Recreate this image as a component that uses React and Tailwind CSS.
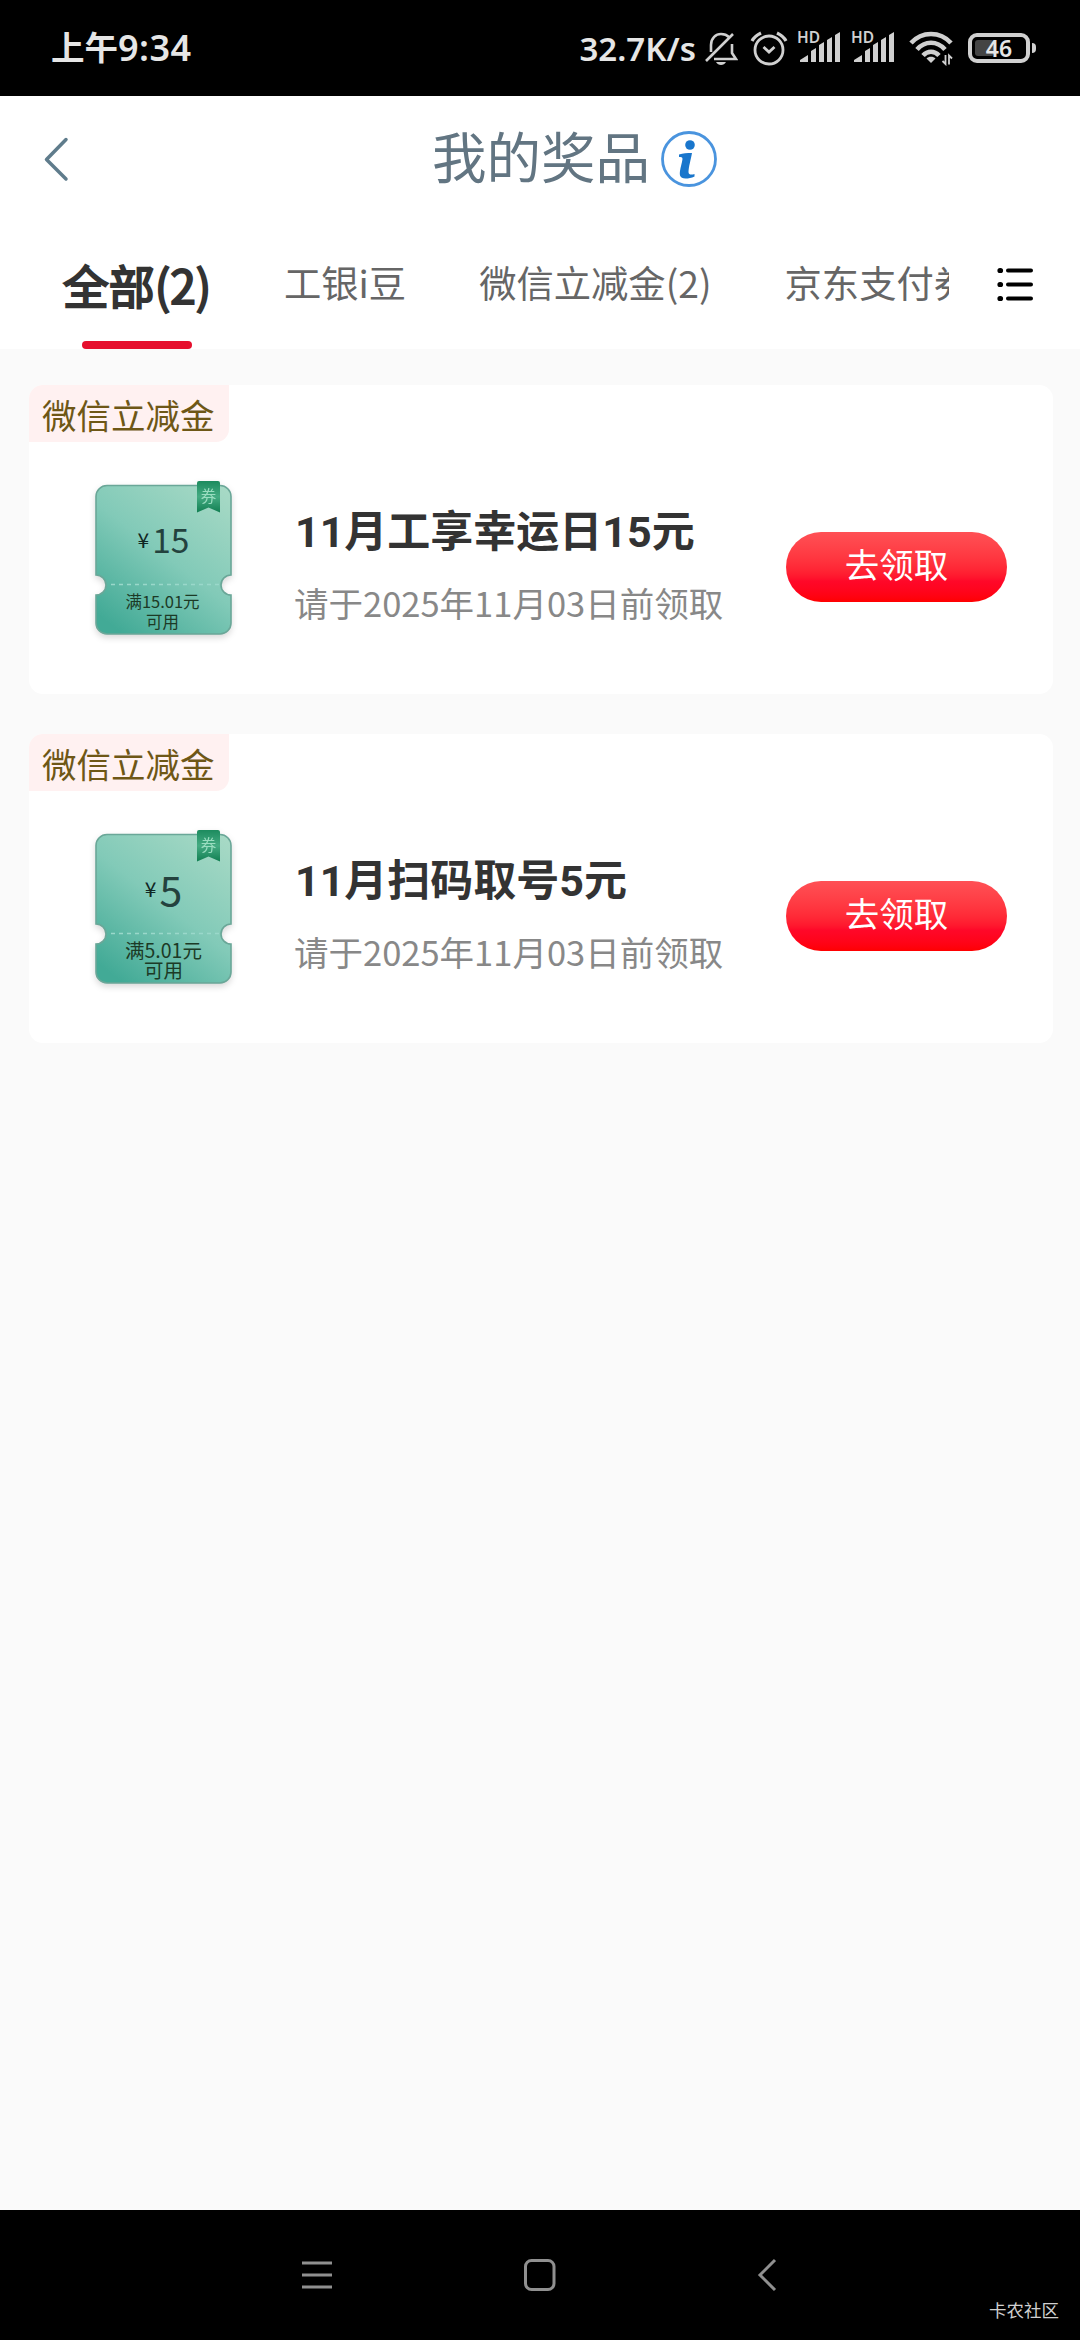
const TABS = ['工银i豆', '微信立减金(2)', '京东支付券'];

const PRIZES = [
    {
        id: 1,
        tag: '微信立减金',
        amount: '15',
        amountClass: 'text-[33.5px]',
        limit: '满15.01元',
        limitClass: 'text-[16.5px] pr-[5px]',
        title: '11月工享幸运日15元',
        desc: '请于2025年11月03日前领取',
    },
    {
        id: 2,
        tag: '微信立减金',
        amount: '5',
        amountClass: 'text-[41px]',
        limit: '满5.01元',
        limitClass: 'text-[19.5px] pr-[3px]',
        title: '11月扫码取号5元',
        desc: '请于2025年11月03日前领取',
    },
];

function SignalIcon() {
    return (
        <svg className="overflow-visible" width="44" height="34" viewBox="0 0 44 34" fill="#d0d0d0">
            <text x="-1" y="12" fontSize="15.5" fontWeight="600" fontFamily="Noto Sans">HD</text>
            <path d="M2 31v-2l8-5v7zM13 31V20l5-3v14zM21 31V14l5-3v20zM29 31V9l5-3v25zM37 31V4l5-3v30z" />
        </svg>
    );
}

function StatusBar() {
    return (
        <div className="flex h-24 shrink-0 items-center bg-black pl-[51px] pr-[44px] font-['Noto_Sans','Noto_Sans_CJK_SC',sans-serif] font-semibold text-[#e6e6e6]">
            <span className="flex items-center leading-none">
                <span className="text-[33.5px]">上午</span>
                <span className="text-[36px] tracking-[0.5px]">9:34</span>
            </span>
            <span className="ml-auto text-[33px] leading-none">32.7K/s</span>
            <div className="ml-[8px] flex h-9 items-center">
                {/* Muted bell */}
                <svg width="34" height="36" viewBox="0 0 34 36" fill="none" stroke="#d0d0d0" strokeWidth="2.6">
                    <path d="M7 22V15C7 8 12 4 17 4c4 0 6 1 8 3M28 14v9l4 6H10M29 4L2 31" />
                    <path d="M12 32h10c-1 2-3 3-5 3s-4-1-5-3z" fill="#d0d0d0" stroke="none" />
                </svg>
                {/* Alarm */}
                <svg className="ml-[12px]" width="38" height="36" viewBox="0 0 38 36" fill="none" stroke="#d0d0d0" strokeWidth="2.8">
                    <circle cx="19" cy="20" r="14" />
                    <path d="M2 11c2-4 5-6 9-8M27 3c4 2 7 4 9 8" strokeWidth="3.2" />
                    <path d="M13.5 17l5.5 5 5.5-5" />
                </svg>
            </div>
            <div className="ml-[10px] flex gap-[10px]">
                <SignalIcon />
                <SignalIcon />
            </div>
            {/* Wi-Fi */}
            <svg className="ml-[13px]" width="44" height="36" viewBox="0 0 44 36" fill="none" stroke="#d0d0d0" strokeWidth="4.6">
                <path d="M2 13C13 1 31 1 42 13M8 19.5c8-9 20-9 28 0M14 25.5c4.5-5 11.500-5 16 0" />
                <path d="M22 33l-4.5-4.5c2-2.5 7-2.5 9 0z" fill="#d0d0d0" stroke="none" />
                <path d="M36.5 25v9l-3-3M40 34.500v-9l3 3" strokeWidth="1.8" />
            </svg>
            {/* Battery */}
            <div className="relative ml-[15px] flex h-[30px] w-[62px] items-center justify-center rounded-[9px] border-4 border-[#d0d0d0]">
                <span className="absolute left-[3px] top-[3px] h-4 w-[19px] rounded-[3px] bg-[#444]" />
                <span className="relative text-[23px] leading-none">46</span>
            </div>
            <span className="ml-[2px] h-[10px] w-1 rounded-r bg-[#d0d0d0]" />
        </div>
    );
}

function Header() {
    return (
        <header className="flex h-[126px] shrink-0 items-start bg-white">
            <svg className="ml-[43px] mt-[40px]" width="28" height="48" viewBox="0 0 28 48" fill="none" stroke="#5f7c8c" strokeWidth="3.5" strokeLinecap="round" strokeLinejoin="round">
                <path d="M23 3.500L3.500 23.500 23 43" />
            </svg>
            <h1 className="ml-[361px] mt-[27px] text-[54.5px] leading-[64px] text-[#627582]">我的奖品</h1>
            <svg className="ml-[10px] mt-[34px]" width="58" height="58" viewBox="0 0 58 58">
                <circle cx="29" cy="29" r="26.5" fill="none" stroke="#4a94de" strokeWidth="2.8" />
                <circle cx="30" cy="15" r="4.8" fill="#1976cc" />
                <path d="M19 24.500c4-1.500 8-1.500 13-1.500-1 6-3.500 14-3.500 19 0 3 3 3 6 2v2.500c-3 1.500-6 2-9 2-6 0-6-4-5.500-7.500.5-4 2-8 2.500-12 0-2-1.500-2-3.500-2z" fill="#1976cc" />
            </svg>
        </header>
    );
}

function TabBar() {
    return (
        <nav className="flex h-[127px] shrink-0 bg-white">
            <div className="flex w-[949px] gap-[73px] overflow-hidden whitespace-nowrap pl-[63px] text-[37.3px] text-[#666]">
                <div className="flex w-[148px] shrink-0 flex-col items-center justify-between">
                    <span className="mt-[30px] text-[46px] leading-[64px] text-[#333] [-webkit-text-stroke:2px_#333]">全部(2)</span>
                    <span className="h-2 w-[110px] rounded-full bg-[#e60f2d]" />
                </div>
                {TABS.map((tab) => (
                    <span key={tab} className="mt-[32px] shrink-0 leading-[56px]">{tab}</span>
                ))}
            </div>
            <svg className="ml-[47px] mt-[44px]" width="38" height="36" viewBox="0 0 38 36" stroke="#000" strokeWidth="4" strokeLinecap="round">
                <path d="M12 4.500h23M12 18.500h23M12 32.500h23" />
                <path d="M4 4.500h.5M4 18.500h.5M4 32.500h.5" strokeWidth="5.2" />
            </svg>
        </nav>
    );
}

function Coupon({ id, amount, amountClass, limit, limitClass }) {
    const fill = `coupon-fill-${id}`;
    const ribbon = `coupon-ribbon-${id}`;
    return (
        <div className="relative h-[155px] w-[140px] shrink-0">
            <svg className="absolute inset-0 overflow-visible drop-shadow-[0_3px_3px_rgba(0,0,0,0.15)]" width="140" height="155" viewBox="0 0 140 155">
                <defs>
                    <linearGradient id={fill} x1="0.9" y1="0" x2="0.2" y2="1">
                        <stop offset="0" stopColor="#a6d9c5" />
                        <stop offset="0.5" stopColor="#82cab8" />
                        <stop offset="1" stopColor="#42aa96" />
                    </linearGradient>
                    <linearGradient id={ribbon} x1="0" y1="0" x2="0" y2="1">
                        <stop offset="0" stopColor="#1d8b5e" />
                        <stop offset="0.5" stopColor="#44ab82" />
                        <stop offset="1" stopColor="#117f52" />
                    </linearGradient>
                </defs>
                <path
                    d="M12 4.500h113a11 11 0 0 1 11 11V94a10 10 0 0 0 0 20v28a11 11 0 0 1-11 11H12a11 11 0 0 1-11-11v-28a10 10 0 0 0 0-20V15.500a11 11 0 0 1 11-11z"
                    fill={`url(#${fill})`}
                    stroke="#6aa798"
                    strokeWidth="1.6"
                />
                <path d="M16 103.500h108" stroke="#9ad8ca" strokeWidth="1.5" strokeDasharray="4 4" />
                <path d="M102 2q0-2 2-2h19q2 0 2 2v29.500l-11.500-5-11.500 5z" fill={`url(#${ribbon})`} />
                <text x="113.5" y="20.5" fontSize="15.5" textAnchor="middle" fill="#9addc0">券</text>
            </svg>
            <div className="relative flex h-full flex-col items-center text-center text-[#24423e]">
                <div className="mt-[34px] flex h-[48px] items-center pr-[3px] leading-none">
                    <span className="mr-[3px] text-[21px] text-[#102623]">¥</span>
                    <span className={amountClass}>{amount}</span>
                </div>
                <p className={`${limitClass} mt-[28px] leading-5 text-[#1c3a26]`}>
                    {limit}
                    <br />
                    可用
                </p>
            </div>
        </div>
    );
}

function PrizeCard({ prize }) {
    return (
        <section className="flex h-[309px] w-[1024px] flex-col overflow-hidden rounded-[14px] bg-white">
            <span className="h-[57px] w-[200px] rounded-br-[13px] bg-[#fff1f1] pl-[13px] text-[34.5px] leading-[59px] text-[#6e5716]">
                {prize.tag}
            </span>
            <div className="flex items-start pl-[66px] pt-[39px]">
                <Coupon {...prize} />
                <div className="ml-[60px] mt-[23px] w-[491px] whitespace-nowrap">
                    <h2 className="font-['Roboto','Noto_Sans_CJK_SC',sans-serif] text-[43px] font-bold leading-[56px] text-[#333]">
                        {prize.title}
                    </h2>
                    <p className="-ml-px mt-[17px] text-[34.5px] leading-[50px] text-[#888]">{prize.desc}</p>
                </div>
                <button className="mt-[51px] h-[70px] w-[221px] rounded-full bg-linear-to-b from-[#ff5055] via-[#ff0829] via-70% to-[#ff0000] pb-[7px] text-[34.5px] leading-[63px] text-white">
                    去领取
                </button>
            </div>
        </section>
    );
}

function NavBar() {
    return (
        <footer className="relative flex h-[130px] shrink-0 items-start bg-black pt-[48px]">
            <svg className="ml-[300px]" width="36" height="36" viewBox="0 0 36 36" stroke="#909090" strokeWidth="3">
                <path d="M2 5h30M2 17h30M2 29h30" />
            </svg>
            <svg className="ml-[187px]" width="36" height="36" viewBox="0 0 36 36" fill="none" stroke="#909090" strokeWidth="3">
                <rect x="2.5" y="2.5" width="28.5" height="29" rx="6" />
            </svg>
            <svg className="ml-[197px]" width="24" height="36" viewBox="0 0 24 36" fill="none" stroke="#909090" strokeWidth="3">
                <path d="M19 2L4 17l15 15" />
            </svg>
            <span className="absolute bottom-[18px] right-[21px] text-[17.5px] leading-6 text-[#d0d0d0]">卡农社区</span>
        </footer>
    );
}

export default function App() {
    return (
        <div className="flex h-[2340px] w-[1080px] flex-col overflow-hidden bg-[#fafafa] font-['Noto_Sans_CJK_SC',sans-serif]">
            <StatusBar />
            <Header />
            <TabBar />
            <main className="flex flex-1 flex-col gap-[40px] pl-[29px] pt-[36px]">
                {PRIZES.map((prize) => (
                    <PrizeCard key={prize.id} prize={prize} />
                ))}
            </main>
            <NavBar />
        </div>
    );
}
